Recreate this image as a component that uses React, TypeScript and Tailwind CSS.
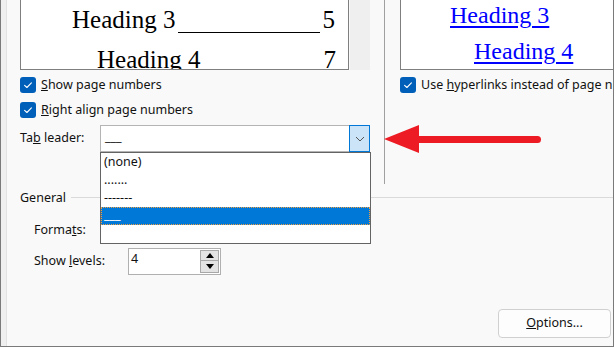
import React from "react";

const ui = "font-['Noto_Sans',sans-serif]";

function Check() {
  return (
    <div className="w-4 h-4 rounded-[3px] bg-[#005fb8] flex items-center justify-center shrink-0">
      <svg width="16" height="16" viewBox="0 0 16 16">
        <path d="M4.6 8.3 L6.9 10.5 L11.4 5.8" fill="none" stroke="white" strokeWidth="1.1" strokeLinecap="round" strokeLinejoin="round" />
      </svg>
    </div>
  );
}

export default function App() {
  return (
    <div className={`w-[616px] h-[348px] bg-white relative overflow-hidden text-[12.5px] text-[#111] ${ui}`}>
      <div className="w-[614px] h-[347px] flex bg-[#f9f9f9] border-l border-r border-b border-[#7a7a7a]">
        {/* left strip */}
        <div className="w-[6px] h-full bg-[#efefef] border-r border-[#e2e2e2] shrink-0" />

        <div className="flex-1 flex flex-col min-w-0">
          {/* top section */}
          <div className="flex h-[184px]">
            {/* left column */}
            <div className="w-[377px] shrink-0 flex flex-col">
              <div className="flex">
                <div className="ml-[13px] w-[329px] h-[70px] bg-white border-l border-r border-b border-[#7f7f7f] overflow-hidden font-['Liberation_Serif',serif] text-[25px] leading-[40px] text-black">
                  <div className="flex items-baseline pl-[51px] pr-[13px]">
                    <span>Heading 3</span>
                    <span className="flex-1 mx-[3px] self-start h-[33px] border-b-[1.5px] border-black" />
                    <span>5</span>
                  </div>
                  <div className="flex items-baseline pl-[76px] pr-[12px]">
                    <span>Heading 4</span>
                    <span className="flex-1" />
                    <span>7</span>
                  </div>
                </div>
                <div className="ml-px w-[20px] h-[70px] bg-[#efefef]" />
              </div>

              <div className="ml-[13px] mt-[7px] flex items-center gap-[5px] h-4">
                <Check />
                <span>
                  <span className="underline">S</span>how page numbers
                </span>
              </div>
              <div className="ml-[13px] mt-[9px] flex items-center gap-[5px] h-4">
                <Check />
                <span>
                  <span className="underline">R</span>ight align page numbers
                </span>
              </div>

              <div className="ml-[13px] mt-[7px] flex items-center">
                <span className="w-[80px]">
                  Ta<span className="underline">b</span> leader:
                </span>
                <div className="relative w-[270px] h-[27px] bg-white border border-[#b4b4b4] flex items-center">
                  <span className="ml-[4px] mt-[-2px]">___</span>
                  <div className="ml-auto mr-[-1px] w-[21px] h-[27px] bg-[#cce4f7] border border-[#0078d7] flex items-center justify-center">
                    <svg width="10" height="6" viewBox="0 0 10 6">
                      <path d="M1 1 L5 5 L9 1" fill="none" stroke="#555" strokeWidth="1" />
                    </svg>
                  </div>

                  {/* open list */}
                  <div className="absolute z-10 left-[-1px] top-[26px] w-[271px] h-[92px] bg-white border border-[#646464] flex flex-col">
                    <div className="h-[18px] pl-[3px] flex items-center">(none)</div>
                    <div className="h-[18px] pl-[3px] flex items-center">.......</div>
                    <div className="h-[18px] pl-[3px] flex items-center">-------</div>
                    <div className="h-[18px] pl-[3px] flex items-center bg-[#0078d7] text-white border border-dotted border-[#f0a040]">
                      <span className="ml-[-1px] mt-[-2px]">___</span>
                    </div>
                  </div>
                </div>
              </div>
            </div>

            {/* separator */}
            <div className="w-px h-full bg-[#a0a0a0] shrink-0" />

            {/* right column */}
            <div className="flex-1 min-w-0 overflow-hidden flex flex-col">
              <div className="ml-[15px] w-[260px] h-[70px] bg-white border-l border-b border-[#7f7f7f] overflow-hidden font-['Liberation_Serif',serif] text-[24px] leading-[36px] text-[#0000ff]">
                <div className="mt-[-3px] pl-[49px]">
                  <span className="underline underline-offset-[3px]">Heading 3</span>
                </div>
                <div className="pl-[73px]">
                  <span className="underline underline-offset-[3px]">Heading 4</span>
                </div>
              </div>
              <div className="ml-[15px] mt-[7px] flex items-center gap-[5px] h-4 whitespace-nowrap">
                <Check />
                <span>
                  Use <span className="underline">h</span>yperlinks instead of page numbers
                </span>
              </div>
            </div>
          </div>

          {/* General group */}
          <div className="flex items-center h-[28px] ml-[13px]">
            <span>General</span>
            <div className="flex-1 h-px bg-[#dadada] ml-[5px] mt-[-2px]" />
          </div>

          <div className="ml-[27px] mt-[5px] flex items-center h-[26px]">
            <span className="w-[66px]">
              Forma<span className="underline">t</span>s:
            </span>
            <div className="w-[270px] h-[26px] bg-white border border-[#b4b4b4]" />
          </div>

          <div className="ml-[27px] mt-[5px] flex items-center h-[27px]">
            <span className="w-[94px]">
              Show <span className="underline">l</span>evels:
            </span>
            <div className="w-[93px] h-[27px] bg-white border border-[#b0b0b0] flex items-center">
              <span className="ml-[2px] mt-[-4px]">4</span>
              <div className="ml-auto mr-px flex flex-col">
                <div className="w-[19px] h-[11px] bg-[#e3e3e3] border border-[#a8a8a8] flex items-center justify-center">
                  <svg width="8" height="5" viewBox="0 0 8 5">
                    <path d="M0 5 L4 0 L8 5 Z" fill="#000" />
                  </svg>
                </div>
                <div className="w-[19px] h-[12px] bg-[#e3e3e3] border border-t-0 border-[#a8a8a8] flex items-center justify-center">
                  <svg width="8" height="5" viewBox="0 0 8 5">
                    <path d="M0 0 L8 0 L4 5 Z" fill="#000" />
                  </svg>
                </div>
              </div>
            </div>
          </div>

          <div className="flex-1" />
          <div className="flex justify-end pr-[2px] pb-[8px]">
            <button className="w-[113px] h-[29px] bg-[#fdfdfd] border border-[#d0d0d0] rounded-[4px] text-[12.5px] text-[#111]">
              <span className="underline">O</span>ptions...
            </button>
          </div>
        </div>
      </div>

      {/* red arrow callout */}
      <svg className="absolute left-[384px] top-[125px]" width="160" height="29" viewBox="0 0 160 29">
        <path d="M0 14 L35 0 L35 28 Z" fill="#ed1c24" />
        <line x1="33" y1="14.5" x2="153.5" y2="14.5" stroke="#ed1c24" strokeWidth="7" strokeLinecap="round" />
      </svg>
    </div>
  );
}
